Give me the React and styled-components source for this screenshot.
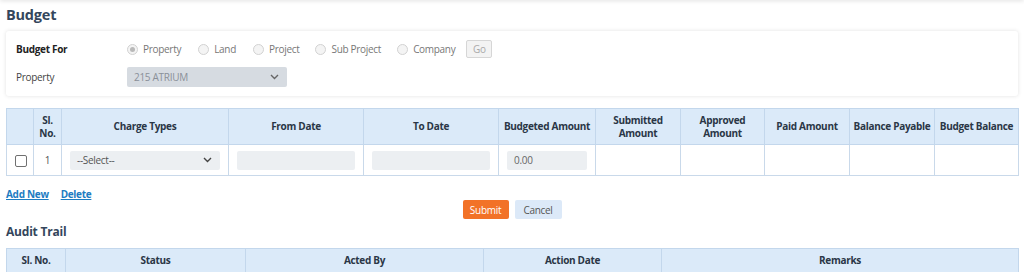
import React from 'react';
import styled, { createGlobalStyle } from 'styled-components';

const GlobalStyle = createGlobalStyle`
  html, body {
    margin: 0;
    padding: 0;
    background: #ffffff;
  }
  body {
    font-family: 'Open Sans', 'Noto Sans', sans-serif;
    font-size: 10px;
    letter-spacing: -0.3px;
    color: #333333;
  }
`;

const Page = styled.div`
  position: relative;
  padding: 0 6px;
  &::before {
    content: '';
    position: absolute;
    left: 0;
    right: 0;
    top: -4px;
    height: 4px;
    box-shadow: 0 1px 4px rgba(0, 0, 0, 0.12);
  }
`;

const Title = styled.h1`
  margin: 0;
  padding-top: 6px;
  height: 25px;
  font-size: 14.5px;
  font-weight: 700;
  letter-spacing: -0.2px;
  color: #34465c;
  line-height: 18px;
`;

const Card = styled.div`
  background: #ffffff;
  border-radius: 3px;
  box-shadow: 0 0 4px rgba(0, 0, 0, 0.12);
  padding: 8px 10px 9px;
  display: flex;
  flex-direction: column;
  gap: 8px;
`;

const FormRow = styled.div`
  display: flex;
  align-items: center;
  height: 20px;
`;

const Label = styled.div`
  width: 111px;
  font-weight: ${p => (p.$bold ? 700 : 400)};
  color: ${p => (p.$bold ? '#222' : '#444')};
`;

const RadioGroup = styled.div`
  display: flex;
  align-items: center;
`;

const RadioItem = styled.label`
  display: flex;
  align-items: center;
  gap: 5px;
  color: #777;
  margin-right: ${p => p.$mr}px;
`;

const RadioDot = styled.span`
  width: 9px;
  height: 9px;
  border-radius: 50%;
  border: 1px solid #d2d2d2;
  background: #f4f4f4;
  display: inline-flex;
  align-items: center;
  justify-content: center;
  &::after {
    content: '';
    width: 5px;
    height: 5px;
    border-radius: 50%;
    background: ${p => (p.$checked ? '#b9b9b9' : 'transparent')};
  }
`;

const GoButton = styled.button`
  height: 18px;
  width: 26px;
  padding: 0;
  border: 1px solid #d6d6d6;
  border-radius: 2px;
  background: #f3f3f3;
  color: #a9a9a9;
  font-family: inherit;
  font-size: 10px;
  letter-spacing: inherit;
`;

const SelectBox = styled.div`
  box-sizing: border-box;
  width: ${p => p.$w}px;
  height: ${p => p.$h || 20}px;
  background: ${p => p.$bg || '#eceff2'};
  border-radius: 2px;
  display: flex;
  align-items: center;
  justify-content: space-between;
  padding: 0 8px 0 7px;
  color: ${p => p.$color || '#555'};
`;

const Chevron = ({ color = '#444' }) => (
  <svg width="9" height="6" viewBox="0 0 9 6">
    <path d="M1 1l3.5 3.5L8 1" fill="none" stroke={color} strokeWidth="1.4" />
  </svg>
);

const Table = styled.table`
  width: 100%;
  border-collapse: collapse;
  table-layout: fixed;
  margin-top: ${p => p.$mt || 0}px;
`;

const Th = styled.th`
  background: #dbeaf9;
  border: 1px solid #c3d7ec;
  color: #2a3646;
  font-weight: 700;
  font-size: 10px;
  line-height: 13px;
  text-align: center;
  padding: 0 3px;
  height: ${p => p.$h}px;
`;

const Td = styled.td`
  border: 1px solid #c9d9ea;
  height: 30px;
  padding: 0 8px;
  text-align: ${p => p.$align || 'left'};
  color: #555;
`;

const Input = styled.div`
  box-sizing: border-box;
  height: 19px;
  background: #eceff2;
  border-radius: 2px;
  padding: 0 7px;
  display: flex;
  align-items: center;
  color: #666;
  width: ${p => (p.$w ? `${p.$w}px` : 'auto')};
`;

const Checkbox = styled.span`
  display: inline-block;
  width: 10px;
  height: 10px;
  border: 1px solid #707070;
  border-radius: 2px;
  vertical-align: middle;
`;

const LinkRow = styled.div`
  display: flex;
  gap: 12px;
  margin-top: 12px;
  height: 13px;
`;

const ActionLink = styled.a`
  color: #1d7cc2;
  font-weight: 700;
  text-decoration: underline;
  line-height: 13px;
`;

const ButtonRow = styled.div`
  display: flex;
  justify-content: center;
  gap: 6px;
  margin-top: -1px;
`;

const Button = styled.button`
  height: 19px;
  padding: 0 6px;
  border: none;
  border-radius: 2px;
  font-family: inherit;
  font-size: 10px;
  letter-spacing: inherit;
  background: ${p => (p.$primary ? '#f27227' : '#dce9f8')};
  color: ${p => (p.$primary ? '#ffffff' : '#555')};
  width: ${p => p.$w}px;
`;

const SubTitle = styled.h2`
  margin: 5px 0 0;
  font-size: 12px;
  font-weight: 700;
  letter-spacing: -0.2px;
  color: #34465c;
  line-height: 16px;
`;

const radios = [
  { label: 'Property', checked: true, mr: 17 },
  { label: 'Land', mr: 17 },
  { label: 'Project', mr: 16 },
  { label: 'Sub Project', mr: 16 },
  { label: 'Company', mr: 11 },
];

const budgetCols = [27, 28, 167, 135, 135, 97, 85, 84, 85, 85, 84];
const budgetHeads = [
  '', 'Sl. No.', 'Charge Types', 'From Date', 'To Date', 'Budgeted Amount',
  'Submitted Amount', 'Approved Amount', 'Paid Amount', 'Balance Payable', 'Budget Balance',
];

const auditCols = [59, 180, 238, 178, 357];
const auditHeads = ['Sl. No.', 'Status', 'Acted By', 'Action Date', 'Remarks'];

const App = () => (
  <>
    <GlobalStyle />
    <Page>
      <Title>Budget</Title>

      <Card>
        <FormRow>
          <Label $bold>Budget For</Label>
          <RadioGroup>
            {radios.map(r => (
              <RadioItem key={r.label} $mr={r.mr}>
                <RadioDot $checked={r.checked} />
                {r.label}
              </RadioItem>
            ))}
            <GoButton disabled>Go</GoButton>
          </RadioGroup>
        </FormRow>
        <FormRow>
          <Label>Property</Label>
          <SelectBox $w={160} $bg="#d6dbe1" $color="#8a9099">
            215 ATRIUM
            <Chevron color="#666" />
          </SelectBox>
        </FormRow>
      </Card>

      <Table $mt={12}>
        <colgroup>
          {budgetCols.map((w, i) => <col key={i} style={{ width: w }} />)}
        </colgroup>
        <thead>
          <tr>
            {budgetHeads.map((h, i) => (
              <Th key={i} $h={35}>
                {h === 'Sl. No.' ? <>Sl.<br />No.</> : h}
              </Th>
            ))}
          </tr>
        </thead>
        <tbody>
          <tr>
            <Td $align="center"><Checkbox /></Td>
            <Td $align="center">1</Td>
            <Td>
              <SelectBox $w={150} $h={19}>
                --Select--
                <Chevron />
              </SelectBox>
            </Td>
            <Td><Input /></Td>
            <Td><Input /></Td>
            <Td><Input $w={80}>0.00</Input></Td>
            <Td />
            <Td />
            <Td />
            <Td />
            <Td />
          </tr>
        </tbody>
      </Table>

      <LinkRow>
        <ActionLink>Add New</ActionLink>
        <ActionLink>Delete</ActionLink>
      </LinkRow>

      <ButtonRow>
        <Button $primary $w={46}>Submit</Button>
        <Button $w={47}>Cancel</Button>
      </ButtonRow>

      <SubTitle>Audit Trail</SubTitle>

      <Table $mt={8}>
        <colgroup>
          {auditCols.map((w, i) => <col key={i} style={{ width: w }} />)}
        </colgroup>
        <thead>
          <tr>
            {auditHeads.map(h => <Th key={h} $h={23}>{h}</Th>)}
          </tr>
        </thead>
      </Table>
    </Page>
  </>
);

export default App;
